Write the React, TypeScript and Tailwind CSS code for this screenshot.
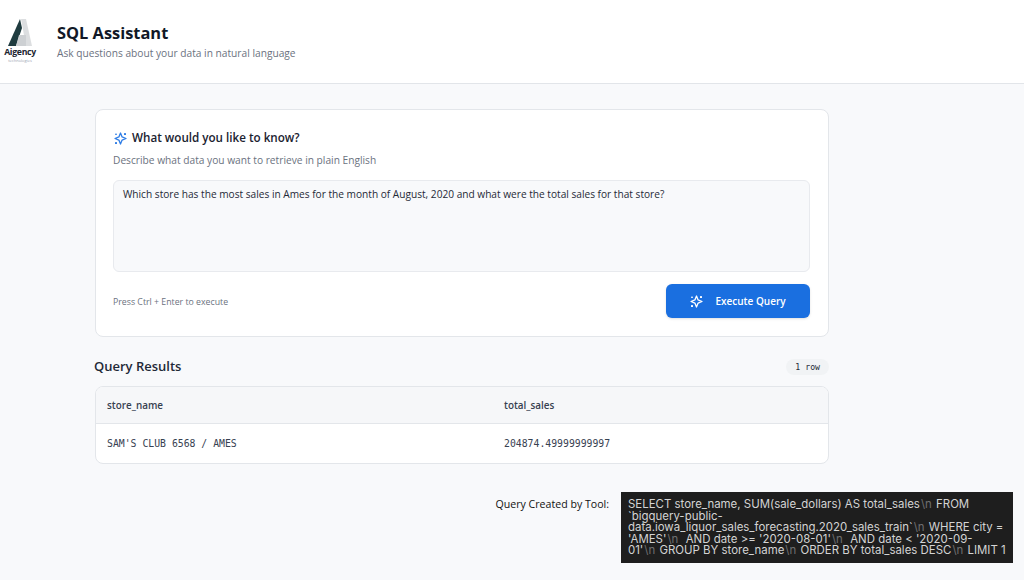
function Logo() {
  return (
    <div className="w-[40px] h-[46px] flex flex-col items-center">
      <svg width="26" height="27" viewBox="0 0 26 27" className="shrink-0">
        <polygon points="13,0 1,27 9,27 15,9" fill="#1f3b3f" />
        <polygon points="14,0 19,0 25,27 19,27" fill="#dcdee0" />
        <polygon points="12,16 19,16 19,27 9,27" fill="#cdd0d3" />
      </svg>
      <span className="text-[8.7px] leading-[11px] font-bold tracking-[-0.3px] text-[#1c2530] mt-[1px]">Aigency</span>
      <span className="text-[4px] leading-[5px] text-gray-400">technologies</span>
    </div>
  );
}

// four point star with small dots in the corners
function SparkIcon({ className }: { className?: string }) {
  return (
    <svg width="13" height="13" viewBox="0 0 13 13" className={className} fill="none">
      <path d="M6.5 1 L8.1 4.9 L12 6.5 L8.1 8.1 L6.5 12 L4.9 8.1 L1 6.5 L4.9 4.9 Z" stroke="currentColor" strokeWidth="1.3" strokeLinejoin="round" />
      <rect x="10" y="1" width="2" height="2" rx="0.6" fill="currentColor" />
      <rect x="1.2" y="1.4" width="1.6" height="1.6" rx="0.5" fill="currentColor" />
      <rect x="1" y="10" width="2" height="2" rx="0.6" fill="currentColor" />
    </svg>
  );
}

function Nl() {
  return <span className="text-[#6f6f6f] mx-[1px]">\n</span>;
}

export default function App() {
  return (
    <div className="h-[580px] w-[1024px] overflow-hidden bg-[#f8f9fb] flex flex-col font-['Open_Sans',sans-serif]">
      <header className="h-[84px] bg-white border-b border-[#e2e5e9] flex items-center gap-[17px] shrink-0">
        <div className="pt-[1px]">
          <Logo />
        </div>
        <div className="flex flex-col pb-[2px]">
          <h1 className="text-[16.4px] leading-[24px] font-bold text-[#111827]">SQL Assistant</h1>
          <p className="text-[10.2px] leading-[16px] text-[#6b7280]">Ask questions about your data in natural language</p>
        </div>
      </header>

      <main className="flex-1 pl-[95px] pt-[25px]">
        <div className="w-[734px]">
          <section className="h-[228px] bg-white border border-[#e3e6ea] rounded-lg pl-[17px] pr-[18px] pt-[18px]">
            <div className="flex items-center gap-[5px] h-[20px] pl-[1px]">
              <SparkIcon className="text-[#2f7de6]" />
              <h2 className="text-[11.65px] font-semibold text-[#1a2230]">What would you like to know?</h2>
            </div>
            <p className="text-[10.2px] leading-[14px] text-[#6b7280] mt-[5px]">Describe what data you want to retrieve in plain English</p>
            <div className="h-[92px] mt-[13px] bg-[#f8f9fb] border border-[#e8eaee] rounded-md px-[9px] py-[6px] text-[10.15px] leading-[14px] text-[#1f2937]">
              Which store has the most sales in Ames for the month of August, 2020 and what were the total sales for that store?
            </div>
            <div className="flex items-center justify-between mt-[12px]">
              <span className="text-[8.75px] text-[#6b7280] pt-[3px]">Press Ctrl + Enter to execute</span>
              <button className="w-[144px] h-[34px] bg-[#1a6fe0] rounded-md text-white text-[10px] font-semibold flex items-center justify-center gap-[12px] shadow-sm">
                <SparkIcon />
                Execute Query
              </button>
            </div>
          </section>

          <div className="flex items-center justify-between mt-[20px] h-[20px]">
            <h2 className="text-[13px] font-semibold text-[#1f2937] -ml-[1px]">Query Results</h2>
            <span className="font-['DejaVu_Sans_Mono',monospace] text-[8.2px] text-[#1f2937] bg-[#f1f3f5] rounded-full px-[9px] h-[16px] flex items-center">1 row</span>
          </div>

          <div className="mt-[9px] h-[78px] bg-white border border-[#e3e6ea] rounded-lg overflow-hidden">
            <div className="h-[37px] grid grid-cols-[397px_1fr] items-center bg-[#f6f7f9] border-b border-[#e3e6ea] px-[11px] text-[9.9px] font-semibold text-[#374151]">
              <span>store_name</span>
              <span>total_sales</span>
            </div>
            <div className="h-[40px] grid grid-cols-[397px_1fr] items-center px-[11px] font-['DejaVu_Sans_Mono',monospace] text-[9.8px] text-[#374151]">
              <span>SAM'S CLUB 6568 / AMES</span>
              <span>204874.49999999997</span>
            </div>
          </div>
        </div>

        <div className="flex justify-end gap-[12px] mt-[28px] mr-[11px]">
          <span className="text-[10.6px] leading-[25px] text-[#111111]">Query Created by Tool:</span>
          <div className="w-[392px] h-[71px] bg-[#1e1e1e] px-[7px] pt-[7px] text-[11.45px] leading-[11.6px] text-[#d4d4d4] font-['Inter',sans-serif] whitespace-nowrap">
            SELECT store_name, SUM(sale_dollars) AS total_sales<Nl /> FROM<br />
            `bigquery-public-<br />
            data.iowa_liquor_sales_forecasting.2020_sales_train`<Nl /> WHERE city =<br />
            'AMES'<Nl /> &nbsp;AND date &gt;= '2020-08-01'<Nl /> &nbsp;AND date &lt; '2020-09-<br />
            01'<Nl /> GROUP BY store_name<Nl /> ORDER BY total_sales DESC<Nl /> LIMIT 1
          </div>
        </div>
      </main>
    </div>
  );
}
